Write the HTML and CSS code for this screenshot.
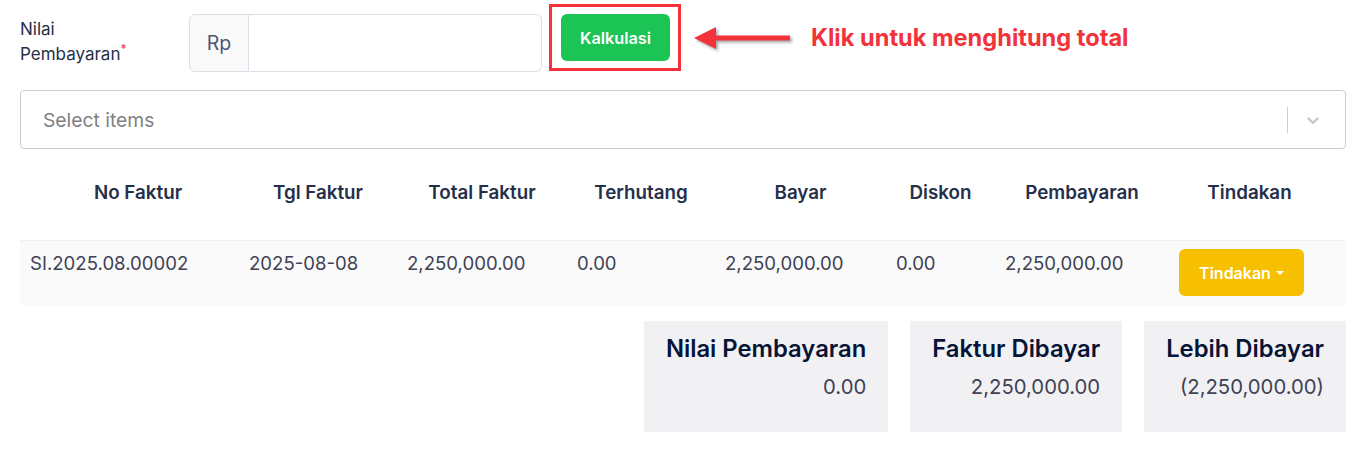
FILE: index.html
```html
<!DOCTYPE html>
<html lang="id">
<head>
<meta charset="utf-8">
<title>Pembayaran</title>
<link rel="stylesheet" href="styles.css">
</head>
<body>
<div class="page">
  <div class="top">
    <label class="label">Nilai<br>Pembayaran<span class="req">*</span></label>
    <div class="input-group">
      <span class="addon">Rp</span>
      <input class="amount" type="text">
    </div>
    <div class="callout">
      <button class="btn-calc" type="button">Kalkulasi</button>
    </div>
    <svg class="arrow" width="104" height="34" viewBox="0 0 104 34">
      <path d="M2 16 L24 5 L24 13.5 L98 13.5 L98 18.5 L24 18.5 L24 27 Z" fill="#f2333c"/>
    </svg>
    <span class="hint">Klik untuk menghitung total</span>
  </div>

  <div class="select">
    <span class="placeholder">Select items</span>
    <span class="sep"></span>
    <svg class="chev" width="20" height="20" viewBox="0 0 20 20"><path d="M4.516 7.548c0.436-0.446 1.043-0.481 1.576 0l3.908 3.747 3.908-3.747c0.533-0.481 1.141-0.446 1.574 0 0.436 0.445 0.408 1.197 0 1.615-0.406 0.418-4.695 4.502-4.695 4.502-0.217 0.223-0.502 0.335-0.787 0.335s-0.57-0.112-0.789-0.335c0 0-4.287-4.084-4.695-4.502s-0.436-1.17 0-1.615z" fill="#c8c8c8"/></svg>
  </div>

  <table class="grid">
    <colgroup>
      <col style="width:219px"><col style="width:158px"><col style="width:170px"><col style="width:148px">
      <col style="width:171px"><col style="width:109px"><col style="width:174px"><col style="width:177px">
    </colgroup>
    <thead>
      <tr>
        <th class="first">No Faktur</th>
        <th>Tgl Faktur</th>
        <th>Total Faktur</th>
        <th>Terhutang</th>
        <th>Bayar</th>
        <th>Diskon</th>
        <th>Pembayaran</th>
        <th class="last">Tindakan</th>
      </tr>
    </thead>
    <tbody>
      <tr>
        <td>SI.2025.08.00002</td>
        <td>2025-08-08</td>
        <td>2,250,000.00</td>
        <td>0.00</td>
        <td>2,250,000.00</td>
        <td>0.00</td>
        <td>2,250,000.00</td>
        <td><button class="btn-action" type="button">Tindakan <span class="caret"></span></button></td>
      </tr>
    </tbody>
  </table>

  <div class="summary">
    <div class="card">
      <div class="card-title">Nilai Pembayaran</div>
      <div class="card-value">0.00</div>
    </div>
    <div class="card">
      <div class="card-title">Faktur Dibayar</div>
      <div class="card-value">2,250,000.00</div>
    </div>
    <div class="card">
      <div class="card-title">Lebih Dibayar</div>
      <div class="card-value">(2,250,000.00)</div>
    </div>
  </div>
</div>
</body>
</html>
```
FILE: styles.css
```css
* { box-sizing: border-box; }
html, body { margin: 0; padding: 0; background: #ffffff; }
body {
  font-family: Inter, "Noto Sans", "Liberation Sans", sans-serif;
  color: #252f4a;
}
.page { padding: 4px 20px 0 20px; }

/* top row */
.top { display: flex; align-items: flex-start; }
.label {
  width: 169px;
  margin-top: 13px;
  font-size: 17px;
  line-height: 25px;
  color: #252f4a;
}
.req { color: #f8285a; font-size: 12px; line-height: 0; vertical-align: 7px; }
.input-group { display: flex; margin-top: 10px; width: 353px; height: 58px; }
.addon {
  width: 60px;
  display: flex; align-items: center; justify-content: center;
  background: #f9f9f9;
  border: 1px solid #dbdfe9;
  border-radius: 6px 0 0 6px;
  font-size: 19.5px;
  color: #4b5675;
}
.amount {
  flex: 1;
  border: 1px solid #dbdfe9;
  border-left: none;
  border-radius: 0 6px 6px 0;
  background: #fff;
  outline: none;
  font: inherit;
}
.callout {
  margin-left: 7px;
  width: 132px;
  height: 67px;
  border: 3px solid #f6313b;
  padding: 7px 0 0 9px;
}
.btn-calc {
  width: 109px; height: 47px;
  border: none; border-radius: 6px;
  background: #1bc454;
  color: #ffffff;
  font-family: inherit;
  font-size: 16.3px;
  font-weight: 600;
}
.arrow { margin-left: 11px; margin-top: 18px; filter: drop-shadow(2px 2px 1.5px rgba(0,0,0,0.35)); }
.hint {
  margin-left: 15px;
  margin-top: 18px;
  font-size: 23.6px;
  line-height: 32px;
  font-weight: 700;
  color: #f2333c;
}

/* select */
.select {
  margin-top: 18px;
  height: 59px;
  border: 1px solid #cccccc;
  border-radius: 4px;
  display: flex; align-items: center;
  padding: 0 22px 0 22px;
}
.placeholder { flex: 1; font-size: 19.3px; color: #808080; }
.sep { width: 1px; height: 26px; background: #cccccc; margin-right: 15px; }
.chev { display: block; }

/* table */
.grid {
  width: 1326px;
  table-layout: fixed;
  border-collapse: collapse;
  margin-top: 0;
}
.grid th {
  padding: 31px 10px 34px;
  font-size: 18.8px;
  line-height: 26px;
  font-weight: 600;
  color: #252f4a;
  text-align: center;
}
.grid th.first { padding-left: 27px; }
.grid th.last { padding-right: 26px; }
.grid tbody tr { background: #fafafa; border-top: 1px solid #eef0f3; }
.grid td {
  padding: 8px 10px 9px;
  font-size: 18.6px;
  line-height: 28px;
  color: #3f4254;
  vertical-align: top;
  white-space: nowrap;
}
.btn-action {
  width: 125px; height: 47px;
  border: none; border-radius: 6px;
  background: #f6c000;
  color: #ffffff;
  font-family: inherit;
  font-size: 16px;
  font-weight: 600;
  display: flex; align-items: center; justify-content: center; gap: 5px;
}
.caret {
  width: 0; height: 0;
  border-left: 4px solid transparent;
  border-right: 4px solid transparent;
  border-top: 4px solid #ffffff;
}

/* summary */
.summary { display: flex; justify-content: flex-end; gap: 22px; margin-top: 16px; }
.card {
  background: #f1f1f4;
  padding: 13px 22px 0 22px;
  height: 111px;
  text-align: right;
}
.card-title { font-size: 23.8px; line-height: 30px; font-weight: 600; color: #071437; }
.card-value { margin-top: 10px; font-size: 20.3px; line-height: 26px; color: #3f4254; }
```
